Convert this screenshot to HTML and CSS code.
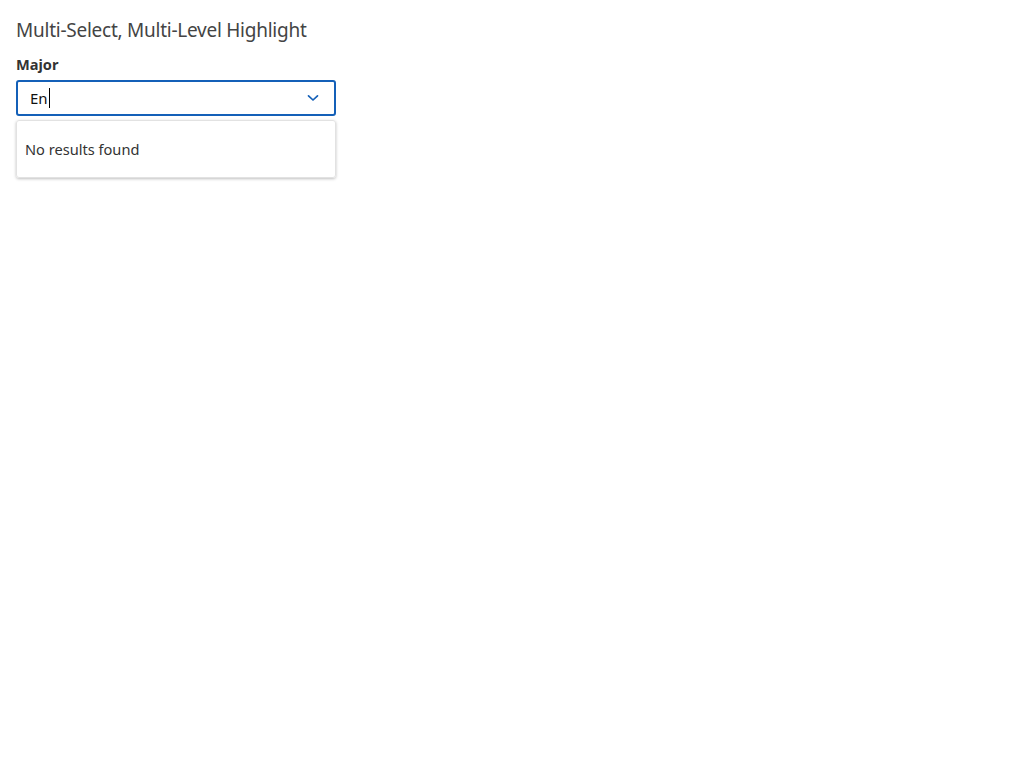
FILE: index.html
```html
<!DOCTYPE html>
<html lang="en">
<head>
<meta charset="utf-8">
<title>Multi-Select, Multi-Level Highlight</title>
<link rel="stylesheet" href="styles.css">
</head>
<body>
<main class="page">
  <h1 class="title">Multi-Select, Multi-Level Highlight</h1>
  <div class="field">
    <label class="label">Major</label>
    <div class="combo">
      <div class="combo-input"><span class="value">En</span><span class="caret"></span></div>
      <svg class="chevron" width="14" height="10" viewBox="0 0 14 10"><path d="M2.5 2.8 L7 7 L11.5 2.8" fill="none" stroke="#1460b8" stroke-width="1.7" stroke-linecap="round" stroke-linejoin="round"/></svg>
    </div>
    <div class="menu">
      <div class="empty">No results found</div>
    </div>
  </div>
</main>
</body>
</html>
```

FILE: styles.css
```css
html, body {
  margin: 0;
  padding: 0;
  background: #ffffff;
}
body {
  font-family: "Noto Sans", "Liberation Sans", sans-serif;
  color: #333333;
}
.page {
  padding: 16px 16px;
}
.title {
  margin: 0;
  font-size: 19px;
  font-weight: 400;
  color: #444444;
  line-height: 28px;
  letter-spacing: -0.25px;
}
.field {
  width: 320px;
  margin-top: 9px;
}
.label {
  display: block;
  font-size: 14.6px;
  font-weight: 700;
  color: #333333;
  line-height: 22px;
  margin-bottom: 5px;
}
.combo {
  box-sizing: border-box;
  height: 36px;
  border: 2px solid #1460b8;
  border-radius: 3px;
  display: flex;
  align-items: center;
  padding: 0 14px 0 12px;
}
.combo-input {
  flex: 1;
  display: flex;
  align-items: center;
  font-size: 15px;
  color: #111111;
}
.caret {
  display: inline-block;
  width: 1px;
  height: 20px;
  background: #000000;
  margin-left: 1px;
}
.chevron {
  display: block;
}
.menu {
  box-sizing: border-box;
  margin-top: 4px;
  height: 58px;
  border: 1px solid #e2e2e2;
  border-radius: 3px;
  box-shadow: 0 1px 3px rgba(0,0,0,0.25);
  display: flex;
  align-items: center;
  padding: 0 8px;
}
.empty {
  font-size: 14.6px;
  color: #333333;
}
```
